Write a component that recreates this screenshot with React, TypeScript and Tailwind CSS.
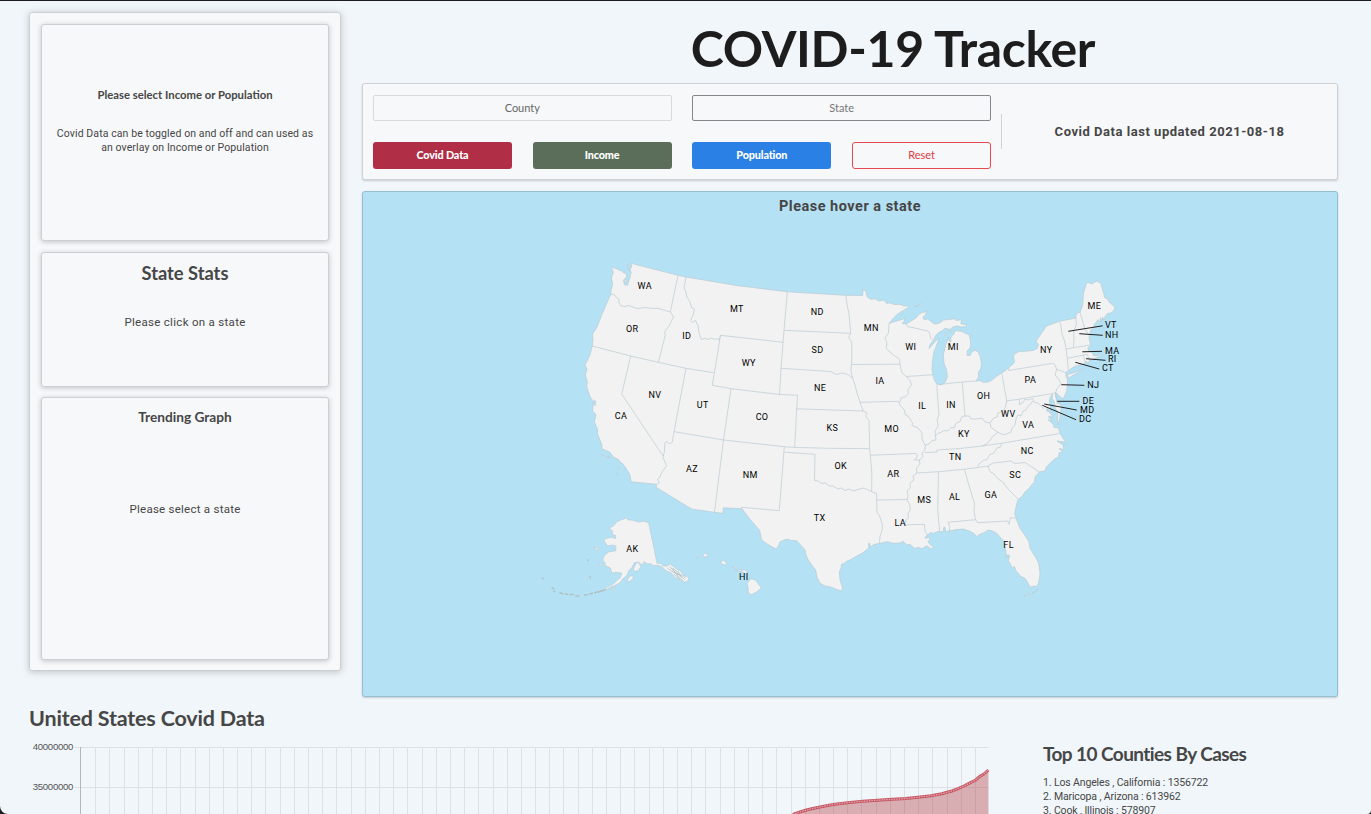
import type { ReactNode } from "react";

const MAINLAND =
  "M612.3 266 614 268 616.7 268.7 618.5 270 621.7 271 624 273 626 273 626.7 276.7 624.5 279 623.3 281 624 282 624 284.3 626.3 285.5 627.7 285 628.5 281.5 630 278 630.3 275 631.3 272.5 630 269.3 631.7 267 631 263.3 678 275.3 686 277 736.5 285.5 787.3 291.8 845.7 295.3 862.7 295.5 863 290 865.6 290.5 867.3 297 871 299.3 875 298.7 879 301 883.3 300 887 303.5 890 302.8 894 304.5 900 304.3 904 306 910 305.7 906 309 901.7 311.3 897 314.5 893.3 318.3 889.3 323.3 895 321.5 900.7 319.8 905 318.5 904 321.5 902 323.3 906 324 911.7 320.7 916 318 918 315 921.5 312.8 927 311.5 925.5 314.5 923 317 924 319.6 927.7 319 930.5 321 933.3 323.5 936.5 324 940 322.7 943.5 320 949 319.5 955 318.7 956 320.5 960 320 961.7 319.8 960.8 324 966.7 324.5 966 326.5 961.7 327 957 326 953.3 326.7 950 329.5 945 328.3 942 331 939.3 332 936 335 933.5 340 929.5 345.7 929 348.5 932.5 344.7 935.5 341 939.3 338 936.7 345 934 351.7 932.3 361.7 932 370 933.7 378.3 936.7 384 940.7 385 945 382.7 947.3 376.7 946.7 370 944 363.3 943.3 355 945 348.3 945.8 344 947.7 340 948.3 337 949 341 951 342 950.7 338 952.7 335 954 334 954.7 330.7 961.7 331.3 965 333 969.3 335 970.2 339 970.7 345 970 348.3 967.5 350.5 967 355.5 970 355.5 972.3 351.5 975 350.3 978 351.5 980 356 981.5 363.3 980.7 369 978.3 372.5 978.7 377 976 381 980 380.5 983.3 382.3 988 382 991.7 380.3 997 376 1001.7 372.7 1005 371 1010 366.7 1014.5 362.5 1013.5 356 1015 353.5 1019 351.5 1025 351.3 1033.3 350.5 1037 348.5 1038.5 344.5 1036 341.5 1037.3 339.5 1041.7 332.7 1046.7 326 1059.3 321.3 1076 318 1076 315 1078 312.5 1080 312.3 1082.7 305 1083.5 293.3 1086.7 282.7 1088.5 282.5 1091.7 284 1096.7 281 1100.7 283.3 1105 298 1107.5 298.5 1109 302 1111.5 304 1115 307.5 1113.7 311 1110 313.5 1108 313 1105 316.7 1104 320 1102.5 317 1101.5 321 1100.5 317.5 1100.3 322.8 1098 319.5 1096.5 322 1094 325 1093.3 328.5 1091 329.5 1090 333.3 1089 338 1090.5 345 1087.8 348 1088.5 351 1092.3 352.3 1093.3 355.5 1098.5 355.5 1098.5 353 1101 355.5 1096 357.8 1092 359.3 1089.5 360.5 1088.3 363 1086 361 1085.3 363.5 1080 364.7 1074 366.7 1068.3 370.7 1065.7 372.5 1066.3 377.3 1067.5 379 1067.3 385 1066.7 391 1063.3 399 1060.5 397 1058 394.5 1055.7 392.7 1055.5 396 1057.3 402 1061.5 406 1060.7 412 1059.5 419 1058 425 1057.3 420 1058 412 1055 408 1054.3 402 1052 398 1052.7 394 1050.3 397 1049.3 401 1050.3 406 1051 411 1047 408.5 1046.3 410.5 1050.5 413 1053 417.5 1049 416 1048.7 417.5 1052.5 421 1048 419.7 1053 424 1054 427.3 1058.5 428 1060 433.3 1063 438 1066.7 444.5 1064 442 1057 441 1063 445 1064 449.5 1059 448.5 1063 452.3 1059 452.5 1058.5 457 1055 458.7 1050 463.3 1046 467.5 1045.3 470.7 1039.3 472 1035 477 1034.5 482 1031.5 485 1029.5 488 1025 492 1022 496.5 1018.3 499.3 1016.7 504 1015.7 508.3 1014.8 514 1016.7 520 1020 528.3 1025.5 536 1029 542 1030 548.3 1035 556.5 1038.5 562.7 1040 573.3 1039.3 579 1038.3 584 1036.7 586.3 1033.5 586.3 1030 587.3 1027.5 582 1025 578.3 1020 576 1018.3 573 1016 571 1014.5 566.5 1012.5 568 1008.3 560.5 1009.7 555.5 1007.5 554.7 1006.3 557.3 1005.8 550 1004.5 546 1003.3 540 1000.5 537.7 996.7 533.3 992.5 531 988.3 530 983.3 533 980 534.3 976.7 536.5 974 533.5 970 531.3 963.3 529 957 529.5 950 530.7 945.7 531.7 945 527.3 944 527 943 531.7 938 531.5 933 533.5 930.7 532.5 926 536 925 538.3 929 537.5 930 539.5 928 541.7 930.5 545 933.3 546.3 931.7 549.3 926.7 545.7 922 548.7 918 547.3 915 548.5 910 544.5 906.7 544.8 903 541.5 900 543 893.3 543.3 886.7 541.7 880 543.3 874 544.5 870.5 547 869.5 543 868.3 543.8 869 547.5 863.3 552.5 857 556 850 560 846 561.5 843.5 564 841.7 564 841 568 839.3 572 840 580 842.3 587 842 591 838 590 831.7 587.3 825 586 820 583.3 817 577 815.7 570 811 564 808.3 560 806 555 805 550 801 545.5 796.7 540.7 791 540.3 786.7 539 780 541.7 778.5 546 776 549 770 545.7 765 542.5 761.3 539.3 760.5 534 759.3 530 755 525 750 519.3 746 514 742 508.7 723.3 507.8 723 513.3 714.5 512.3 691.7 509 656 487.3 656.7 484.3 631 481.7 630 475 626.5 469 623 464 620 461.7 618.5 459.5 613.3 457 610 452.3 606 450.5 601.7 448.5 602 445 600 440 597.5 434 597.7 429.5 594.3 421.7 596 415 592.7 411 593 406 593 402.5 595 406 595.7 401 593 401 590 396.7 586.7 386.7 587.3 382 585.3 375 587 369.5 585 365 587.5 360 590 355 592.3 346 593 339 592.5 334 597 327 601.7 315 606 305 610.7 294.3 611 290.5 612.7 284 611.5 278 613.3 272 612 269Z";

const ISLANDS = [
  "M1066.7 376.3 1069 374 1074 372.7 1078 371 1082.7 368.7 1081 370.5 1075 374.3 1069.5 377.5Z",
  "M1024 596 1027 594 1029.5 593.3 1027.5 595.3Z",
  "M1032 593.3 1035 591.5 1038 588.7 1036 591.5Z",
  "M914.5 306.5 917.5 305.5 920.5 303 918.5 306Z",
  "M601 454.3 604 455 602 456Z M606 456.2 610 457 607 457.7Z M617.5 467 620 468 618.5 469Z M616.5 472.5 618 475 617 474.5Z",
  "M627.3 264 629.3 266 627.8 267Z M628.5 268 630 271 628 270Z M624.8 280.5 626.3 279 627 282.5 625 282.5Z",
  "M948.5 330.5 951 329.5 950 332Z M944.5 334.5 947 333 946 336Z M1057 534.5 1057.5 534.5Z",
];

// Alaska and Hawaii are drawn on a grid three times finer than the map's.
const ALASKA =
  "M237 84 250 78 262 64 275 59 290 54 294 60 306 60 325 66 340 64 356 68 381 190 392 190 400 198 412 198 420 192 440 207 452 214 462 227 476 232 474 243 462 247 447 237 436 234 424 219 408 212 396 200 384 196 371 197 362 191 352 192 343 185 338 194 326 190 333 200 324 212 314 214 310 207 318 190 328 186 313 188 306 202 296 213 291 226 278 237 270 248 252 258 240 262 228 270 217 271 236 259 250 252 262 240 270 234 276 220 262 217 246 219 241 204 226 197 225 188 218 180 223 167 236 156 258 152 257 137 247 135 232 138 222 122 226 116 244 112 256 116 258 107 246 103 248 93Z" +
  "M190 142 198 142 207 149 202 151Z M208 192 218 193 216 198 210 197Z M292 240 298 230 307 226 310 233 302 242 294 246Z M245 262 256 266 250 270Z";
const ALEUTIANS =
  "M171 180 176 181 M180 228 181 235 M36 233 41 238 M65 262 73 268 M70 272 76 276 M88 278 100 282 M104 281 114 284 M118 283 131 284 M136 288 148 288 M162 285 174 284 M177 283 189 279 M193 279 204 275 M204 277 215 272 M212 274 228 268";
const ALASKA_INLETS =
  "M412 204 430 217 449 223 464 239 M419 199 438 221 454 228 M427 205 446 231 461 244 M432 223 449 237 M443 213 455 233 M453 221 467 235 M430 205 443 217";
const HAWAII =
  "M518 165 525 160 533 163 531 170 522 171Z M499 174 505 170 502 174Z M572 184 581 181 590 191 586 195 576 193Z M605 201 624 202 619 206Z M616 209 622 213 619 215Z M626 207 635 211 630 216Z M634 211 643 209 651 214 652 220 642 220Z M659 236 677 240 684 251 694 263 680 276 664 284 655 278 654 260 651 249 659 242Z";

const BORDERS = [
  "610.7 294.3 613.5 294 616 297 618.7 299 619 303 621 306 625 306.5 629 305.5 632 306.7 637 308.5 645 307.6 652 308.3 658 308.3 670.5 312",
  "678 275.3 670.4 311.7 673.5 317 669 326 664.5 332 665.3 335 658.4 362.3",
  "592.3 346 630.7 356 658.3 362.3 686 368.3 713.5 372.7",
  "630.7 356 621.7 394 662.7 455.5 664 455",
  "686 368.3 674 431.7 672.3 442 670 444 667.3 441.7 665 442.3 664.3 452 663 457 666.5 466 662 472 659.5 478 657.5 479.5 659.5 483 656.7 484.3",
  "674 431.7 723.5 440 784.3 446.7 794.7 447.4 830 448.3 869.7 448.7",
  "723.5 440 714.5 512.3",
  "784.3 446.7 779.3 510.7 741.5 507.3 742 508.7",
  "784.5 452.2 815 454.3 814.5 480.3 818 481 822 483.7 825 482.7 829 486 833 486 838 489 841 488 845 490.5 849 489 853 491 858 489.5 864 488 871.7 491.7 876.5 493.5 876.7 500 907 499.5",
  "869.7 448.7 870.3 455.2 871.8 472 871.7 491.7",
  "876.7 500 877 512 880 517 882.3 525 882 531 880 536 879.5 543",
  "870.3 455.2 916 453.5 917.5 456 914.5 460 920 460",
  "925.3 445.3 925 450 922 453 923 457 919.3 460 920 464 916.5 468 917 473 913 476 914 480 910 483 910.3 488 907 491 908 496 907 500 909.5 504 910.3 510 908 513 908.5 518 906 520 904.7 524.9 924.5 524.3 925 531 927.5 535",
  "916.5 473 938.5 471.7 964.3 469.3 977.5 467.5 988 466 993 463 1011 461 1012.5 462.3 1015 463.5 1025 462.5 1039.3 472",
  "925 452.5 937 452 937 450 960 448.5 982.3 446 1001.5 443.3 1060 433.5",
  "1001.5 443.3 1000.5 447 997 448 994 453 990 454.5 987 459.5 983 460.5 979 464 977.5 467.5",
  "988 466 990 471.5 994 474 998 479 1003 482 1008 489 1014 495 1018.3 499.3",
  "964.3 469.3 973 499 974.5 503 974 512 975.7 519.7 977.5 522.7 1007.7 521 1009 524.3 1010.5 517.5 1015.7 518.3",
  "975.7 519.7 948 522.3 950 527 949 530.7",
  "938.5 471.7 937.7 510 939.7 531.7",
  "982.3 446 988 443 993 436 998 432.3 1004 435 1011 432 1012 428 1015 425 1016 419 1018 415 1021 416 1023 411 1026 410 1028 406 1031 404 1032.5 401",
  "1006.7 401 1019.2 399.2 1019.5 404.5 1023 402.5 1025 399 1028.3 400 1032.5 398.5 1034 402 1038 403 1041 406 1044 409",
  "1019.2 399.2 1052.7 393.5 1055.7 392.5",
  "1001.7 372.7 1006.7 401 1005.5 407 1003 411 998 413 997 417 993.5 418 990 423 991 427.5 998 432.3",
  "962.3 382 965 416 969 416 971 419 977 419 982 418 985 422 990 423",
  "940.7 384.3 962.3 382 976 381",
  "965 416 961.5 417 960 421.5 956 423 954.5 428 951 427.5 948 431 944 430.5 941 432.5 937.5 433.5 935.5 436 936 440 932 440.5 929 444 925.3 445.3",
  "936.7 384.5 939 415 937 420 938.3 426 935 431 935.5 436",
  "860 402.3 898.3 401.3 900.5 406 904 409 905.5 415 908 416 912.5 423 912 425.5 918 428 922 433 922 439 925.3 445.3",
  "899.5 403 901 398 905 397 908.5 393 908 389.5 911.5 385 910 380.5 906.5 376.5 902 373 900.5 367.5 900 364.2",
  "906.5 376.5 933.3 374.7",
  "851.5 364.5 900 364.2 899.5 359 893.5 355 886 348.5 887 343 885 338 888.5 333 889 323.3",
  "906 324 907.5 326.5 916 328.3 925 330.5 928 331 930 334 930.5 338 932.5 340",
  "845.7 295.3 847.3 306 849 314 850.7 333.3 848.7 337.5 851.7 342 851.7 364 850.8 370 852.5 378",
  "784 330.3 850.7 333.3",
  "787.3 291.8 784 330.3 781 368.3 779.5 394.5",
  "686 277 684 288 686 292 686.5 296 690 302 691.5 307.5 694.5 309 693 315.5 690.5 320.5 692 322.5 695.5 320.5 698 326 699 332.5 701.5 339.5 705 338.3 708 339.5 711 338 715 339.3 717.5 338.5 719 340.5 720.5 335.3 783.3 342.3",
  "720.5 335.3 712.3 385.3 731 388.7 779.5 394.5 797.5 395.2 796.7 408.8 794.7 447.4",
  "731 388.7 723.5 440",
  "781 368.3 831 371.5 836 374.5 842 373 848 374.5 852.5 378 855 385 857 393 860 402.3 863.3 411 867 413 865.5 416 869 420.5 869.7 448.7",
  "796.7 408.8 863.3 411",
  "1008.5 367.8 1008.8 370.5 1052.5 363.3 1055 365 1056.7 369.3 1065.7 372.5",
  "1056.7 369.3 1055 375 1058.5 379 1061 383.5 1057 388.5 1055.7 392.5 1057 403.7 1061 402.8",
  "1059.3 321.3 1061 326 1062 334 1064.5 341 1066 349 1067.3 358.3 1068.3 370.7",
  "1076 318 1076.3 325 1073.5 331 1074 338 1073.5 347.5",
  "1066 349 1084 346 1089.5 345",
  "1067.3 358.3 1083.5 355 1087 354.3 1089.5 360",
  "1083.5 355 1085.3 363.5",
  "1080 312.3 1082 319 1085 329 1089.5 336",
];

const LEADERS =
  "M1068.3 331.3 1102.7 325.8 M1079.3 333.7 1102.7 335.3 M1082.3 351.8 1102 351.3 M1086 358.7 1105.5 360.3 M1075.3 362.3 1099.3 369 M1061.3 384.7 1084.3 385.3 M1057.3 401.3 1079.3 401.3 M1044.3 404 1076.7 410 M1042.3 405.3 1076 419.7";

const STATES: [string, number, number][] = [
  ["WA", 644.5, 286], ["OR", 632, 329], ["ID", 686.5, 336], ["MT", 736.5, 309], ["ND", 817, 312],
  ["SD", 817.3, 350], ["MN", 871, 328], ["WI", 910.5, 347], ["MI", 953, 347], ["WY", 748.5, 363],
  ["NE", 819.7, 388], ["IA", 879.7, 381], ["NV", 654.7, 395], ["UT", 702.5, 405], ["CO", 761.7, 417],
  ["CA", 620.7, 416], ["KS", 832, 428], ["MO", 891.3, 429], ["IL", 922, 406], ["IN", 950.7, 405],
  ["OH", 983.3, 396], ["KY", 963.5, 434], ["WV", 1008, 414], ["VA", 1028, 425], ["PA", 1030, 380],
  ["NY", 1046, 350], ["ME", 1094, 306], ["NC", 1027, 451], ["TN", 955, 457], ["SC", 1015, 475],
  ["AZ", 691.7, 469], ["NM", 750, 475], ["OK", 840.5, 466], ["AR", 893, 474], ["TX", 819.3, 518],
  ["LA", 900, 523], ["MS", 924, 500], ["AL", 954.3, 497], ["GA", 990.5, 495], ["FL", 1008.3, 545],
  ["AK", 632, 549], ["HI", 743.5, 577], ["VT", 1110.5, 325], ["NH", 1111.5, 335], ["MA", 1112, 351],
  ["RI", 1112, 359], ["CT", 1107.5, 368], ["NJ", 1093, 385], ["DE", 1088, 401], ["MD", 1087, 410],
  ["DC", 1085, 419],
];

function UsaMap() {
  return (
    <svg viewBox="363 222 974 474" className="block h-[474px] w-[974px]" fill="#f2f2f2" stroke="#b9ccd3" strokeWidth="0.7" strokeLinejoin="round">
      <path d={MAINLAND} />
      {ISLANDS.map((d) => <path key={d} d={d} />)}
      <g transform="translate(530 500) scale(0.33333)" strokeWidth="2">
        <path d={ALASKA} />
        <path d={ALEUTIANS} fill="none" stroke="#b2bfc2" strokeWidth="4" />
        <path d={ALASKA_INLETS} fill="none" stroke="#a0b8c2" />
        <path d={HAWAII} />
      </g>
      {BORDERS.map((d) => <path key={d} d={"M" + d} fill="none" />)}
      <path d={LEADERS} stroke="#222" strokeWidth="1" />
      <g fill="#000" stroke="none" className="font-['Roboto','Liberation_Sans',sans-serif] text-[9px] font-normal tracking-[0.35px]" textAnchor="middle">
        {STATES.map(([name, x, y]) => (
          <text key={name} x={x + 0.3} y={y + 3.4}>{name}</text>
        ))}
      </g>
    </svg>
  );
}

const CURVE = "792.8 814.5 800 812 807.4 809.8 814 808.2 821.3 806.7 829 805.2 837 804 850 802.4 862.9 801.3 878 800.2 892.6 799.3 906 798.6 920.3 797 931 795.7 942 793.7 947 792.3 952 791 958 788.6 963.9 786 969 783.4 975.7 780 980 776.3 984 774 988.4 770";

function CasesChart() {
  return (
    <svg viewBox="29 738 961 76" className="block h-[76px] w-[961px]">
      <g stroke="#dce1e4" strokeWidth="1">
        {Array.from({ length: 63 }, (_, i) => {
          const x = Math.round(81 + 14.19 * (i + 1)) + 0.5;
          return <line key={i} x1={x} x2={x} y1="747" y2="814" />;
        })}
        <line x1="74" x2="988.5" y1="747.5" y2="747.5" />
        <line x1="74" x2="988.5" y1="787.5" y2="787.5" />
      </g>
      <line x1="80.5" x2="80.5" y1="747" y2="814" stroke="#b2b7ba" />
      <path d={"M" + CURVE + " 988.4 816 792 816Z"} fill="#b02e35" fillOpacity="0.36" />
      <path d={"M" + CURVE} fill="none" stroke="#c65563" strokeWidth="3" />
      <path d={"M" + CURVE} fill="none" stroke="#e3a5ad" strokeWidth="1.3" strokeDasharray="1.5 1" />
      <g className="font-['Liberation_Sans',Arial,sans-serif] text-[9.6px]" fill="#555" textAnchor="end">
        <text x="73.3" y="750.3" textLength="40.5">40000000</text>
        <text x="73.3" y="790.3" textLength="40.5">35000000</text>
      </g>
    </svg>
  );
}

function Card({ className, children }: { className: string; children?: ReactNode }) {
  return (
    <div className={"flex flex-col items-center rounded-[3px] border border-[#cdd0d3] bg-[#f7f8fa] text-center shadow-[0_1px_5px_rgba(34,36,38,0.25)] " + className}>
      {children}
    </div>
  );
}

const BODY = "font-['Roboto','Liberation_Sans',sans-serif]";

export default function App() {
  return (
    <div className="h-[814px] w-[1371px] overflow-hidden bg-[#1d1c20] pt-px font-['Lato',sans-serif] text-[#464646]">
      <div className="flex h-[813px] flex-col overflow-hidden rounded-br-[4px] rounded-bl-[8px] bg-[#f0f6fa] pr-[33px] pl-[29px]">
        <div className="flex h-[696px] shrink-0 gap-[21px] pt-[11px]">
          <aside className="flex h-[659px] w-[312px] shrink-0 flex-col rounded-[3px] border border-[#cdd0d3] bg-[#f7f8fa] px-[11px] pt-[11px] shadow-[0_1px_7px_rgba(34,36,38,0.25)]">
            <Card className="h-[217px] w-[288px] shrink-0 pt-[62px]">
              <h5 className="text-[11.3px] leading-4 font-bold whitespace-nowrap">Please select Income or Population</h5>
              <p className={BODY + " mt-[24px] text-[10.5px] leading-[14px] tracking-[0.1px] whitespace-nowrap"}>
                Covid Data can be toggled on and off and can used as
                <br />
                an overlay on Income or Population
              </p>
            </Card>
            <Card className="mt-[11px] h-[135px] w-[288px] shrink-0 pt-[8px]">
              <h3 className="text-[18.3px] leading-6 font-bold">State Stats</h3>
              <p className={BODY + " mt-[29px] text-[11.5px] leading-4 tracking-[0.3px]"}>Please click on a state</p>
            </Card>
            <Card className="mt-[10px] h-[263px] w-[288px] shrink-0 pt-[9px]">
              <h4 className="text-[13.7px] leading-5 font-bold">Trending Graph</h4>
              <p className={BODY + " mt-[74px] text-[11.5px] leading-4 tracking-[0.25px]"}>Please select a state</p>
            </Card>
          </aside>

          <main className="flex w-[976px] shrink-0 flex-col">
            <h1 className="h-[71px] pl-[86px] text-center text-[50px] leading-[73px] font-bold tracking-[-0.35px] whitespace-nowrap text-[#1d1d1d]">COVID-19 Tracker</h1>
            <section className="flex h-[97px] shrink-0 items-center rounded-[3px] border border-[#d0d3d6] bg-[#f7f8fa] pl-[10px] shadow-[0_1px_2px_rgba(34,36,38,0.2)]">
              <div className="grid h-[74px] w-[618px] grid-cols-4 content-between gap-x-[20.8px] text-[11px]">
                <button className="col-span-2 h-[26px] rounded-[2px] border border-[#d9dadc] pt-px text-[#666]">County</button>
                <button className="col-span-2 h-[26px] rounded-[2px] border border-[#85878a] pt-px text-[#777]">State</button>
                <button className="h-[27px] rounded-[3px] bg-[#b02e46] text-[10.8px] font-black tracking-[-0.15px] text-white">Covid Data</button>
                <button className="h-[27px] rounded-[3px] bg-[#5b6e5a] text-[10.8px] font-black tracking-[-0.15px] text-white">Income</button>
                <button className="h-[27px] rounded-[3px] bg-[#2a80e4] text-[10.8px] font-black tracking-[-0.15px] text-white">Population</button>
                <button className="h-[27px] rounded-[3px] border border-[#e5484f] text-[#e03a42]">Reset</button>
              </div>
              <div className="ml-[10px] h-[35px] w-px bg-[#d0d2d5]" />
              <p className={BODY + " flex-1 text-center text-[13px] font-bold tracking-[0.53px]"}>Covid Data last updated 2021-08-18</p>
            </section>
            <section className="mt-[11px] h-[506px] shrink-0 rounded-[3px] border border-[#93bfd0] bg-[#b4e1f4] shadow-[0_1px_2px_rgba(34,36,38,0.2)]">
              <h2 className={BODY + " h-[30px] pt-px text-center text-[14.5px] leading-[28px] font-bold tracking-[0.5px]"}>Please hover a state</h2>
              <UsaMap />
            </section>
          </main>
        </div>

        <div className="flex">
          <section className="w-[1014px] shrink-0">
            <h2 className="h-[41px] pt-[8px] text-[21.5px] leading-[27px] font-bold tracking-[-0.18px]">United States Covid Data</h2>
            <CasesChart />
          </section>
          <section className="pt-[43px]">
            <h3 className="text-[19px] leading-[27px] font-bold tracking-[-0.58px] whitespace-nowrap">Top 10 Counties By Cases</h3>
            <ol className={BODY + " mt-[9px] text-[10.5px] leading-[14px] tracking-[-0.13px] whitespace-nowrap"}>
              <li>1. Los Angeles , California : 1356722</li>
              <li>2. Maricopa , Arizona : 613962</li>
              <li>3. Cook , Illinois : 578907</li>
            </ol>
          </section>
        </div>
      </div>
    </div>
  );
}
